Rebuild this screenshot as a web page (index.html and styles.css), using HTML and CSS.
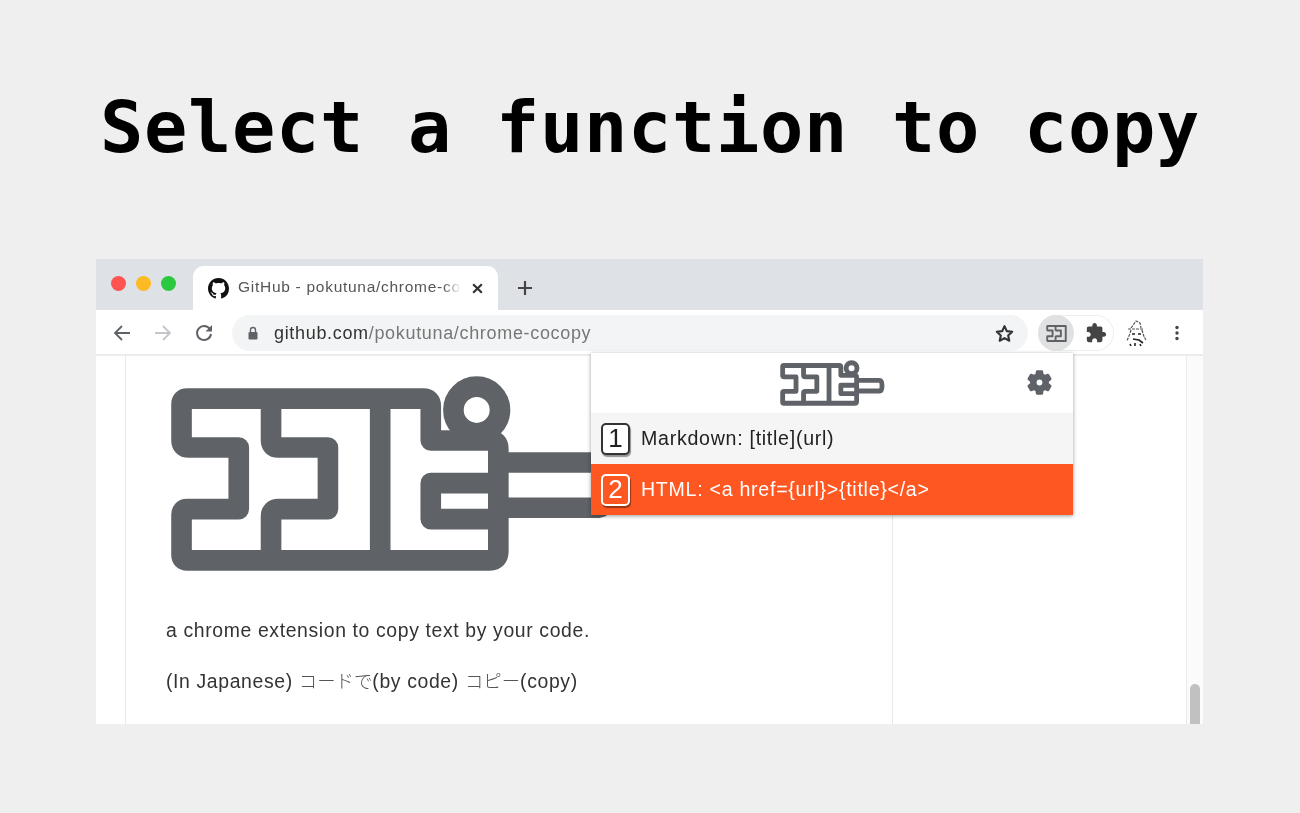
FILE: index.html
```html
<!DOCTYPE html>
<html lang="en">
<head>
<meta charset="utf-8">
<title>Select a function to copy</title>
<link rel="stylesheet" href="styles.css">
</head>
<body>
<svg class="defs" width="0" height="0" aria-hidden="true">
  <symbol id="logo" viewBox="62 30 1345 592">
    <g fill="none" stroke="#5f6368" stroke-width="62" stroke-linejoin="round">
      <circle cx="980" cy="135" r="70"/>
      <path d="M1045 293H1340Q1372 293 1372 361Q1372 429 1340 429H1045"/>
      <path d="M110 101H820Q842 101 842 123V227H1020Q1045 227 1045 252V560Q1045 587 1020 587H110Q93 587 93 570V450Q93 433 110 433H265V248H115Q93 248 93 226V118Q93 101 110 101Z"/>
      <path d="M362 101V226Q362 248 384 248H533V433H384Q362 433 362 455V587"/>
      <path d="M690 101V587"/>
      <path d="M1045 355H842V463H1045"/>
    </g>
  </symbol>
  <symbol id="mark" viewBox="62 70 660 548">
    <g fill="none" stroke="#5f6368" stroke-width="62" stroke-linejoin="round">
      <path d="M110 101H690V587H110Q93 587 93 570V450Q93 433 110 433H265V248H115Q93 248 93 226V118Q93 101 110 101Z"/>
      <path d="M362 101V226Q362 248 384 248H533V433H384Q362 433 362 455V587"/>
    </g>
  </symbol>
</svg>

<h1 class="headline">Select a function to copy</h1>

<div class="browser">
  <div class="tabstrip">
    <div class="lights">
      <span class="light red"></span>
      <span class="light yellow"></span>
      <span class="light green"></span>
    </div>
    <div class="tab">
      <svg class="favicon" viewBox="0 0 16 16"><path fill="#111" d="M8 0C3.58 0 0 3.58 0 8c0 3.54 2.29 6.53 5.47 7.59.4.07.55-.17.55-.38 0-.19-.01-.82-.01-1.49-2.01.37-2.53-.49-2.69-.94-.09-.23-.48-.94-.82-1.13-.28-.15-.68-.52-.01-.53.63-.01 1.08.58 1.23.82.72 1.21 1.87.87 2.33.66.07-.52.28-.87.51-1.07-1.78-.2-3.64-.89-3.64-3.95 0-.87.31-1.59.82-2.15-.08-.2-.36-1.02.08-2.12 0 0 .67-.21 2.2.82.64-.18 1.32-.27 2-.27s1.36.09 2 .27c1.53-1.04 2.2-.82 2.2-.82.44 1.1.16 1.92.08 2.12.51.56.82 1.27.82 2.15 0 3.07-1.87 3.75-3.65 3.95.29.25.54.73.54 1.48 0 1.07-.01 1.93-.01 2.2 0 .21.15.46.55.38A8.01 8.01 0 0 0 16 8c0-4.42-3.58-8-8-8z"/></svg>
      <span class="tab-title">GitHub - pokutuna/chrome-co</span>
      <svg class="tab-close" viewBox="0 0 12 12"><path d="M2 2l8 8M10 2l-8 8" stroke="#333" stroke-width="2" fill="none"/></svg>
    </div>
    <svg class="newtab" viewBox="0 0 16 16"><path d="M8 1v14M1 8h14" stroke="#444" stroke-width="2.200" fill="none"/></svg>
  </div>

  <div class="toolbar">
    <svg class="nav" viewBox="0 0 18 18"><path d="M17 9H2M9 2L2 9l7 7" fill="none" stroke="#5f6368" stroke-width="1.800"/></svg>
    <svg class="nav" viewBox="0 0 18 18"><path d="M1 9h15M9 2l7 7-7 7" fill="none" stroke="#c4c6c9" stroke-width="1.800"/></svg>
    <svg class="nav" viewBox="0 0 18 18"><path d="M14.800 5A7 7 0 1 0 16 10" fill="none" stroke="#5f6368" stroke-width="2"/><path d="M17 1v6.500h-6.500z" fill="#5f6368"/></svg>
    <div class="omnibox">
      <svg class="lock" viewBox="0 0 12 14"><path d="M3.500 6V4a2.500 2.500 0 0 1 5 0v2" fill="none" stroke="#5f6368" stroke-width="1.400"/><rect x="1.500" y="6" width="9" height="7.500" rx="1" fill="#5f6368"/></svg>
      <span class="url"><span class="host">github.com</span>/pokutuna/chrome-cocopy</span>
      <svg class="star" viewBox="0 0 24 24"><path d="M12 3.600l2.600 5.700 6.200.7-4.600 4.200 1.300 6.100L12 17.200l-5.500 3.100 1.300-6.100L3.200 10l6.200-.7z" fill="none" stroke="#333" stroke-width="2.400" stroke-linejoin="round"/></svg>
    </div>
    <div class="pill">
      <span class="ext-active">
        <svg class="ext-icon"><use href="#mark"/></svg>
      </span>
      <svg class="puzzle" viewBox="0 0 24 24"><path fill="#444" d="M20.500 11H19V7c0-1.100-.9-2-2-2h-4V3.500C13 2.120 11.880 1 10.500 1S8 2.120 8 3.500V5H4c-1.100 0-1.990.9-1.990 2v3.800H3.500c1.490 0 2.700 1.210 2.700 2.700s-1.210 2.700-2.700 2.700H2V20c0 1.100.9 2 2 2h3.800v-1.500c0-1.490 1.210-2.700 2.700-2.700 1.490 0 2.700 1.210 2.700 2.700V22H17c1.100 0 2-.9 2-2v-4h1.500c1.380 0 2.500-1.120 2.500-2.500S21.880 11 20.500 11z"/></svg>
    </div>
    <svg class="avatar" viewBox="0 0 26 28"><path d="M8 9l5-7 4 2 1 5M5 10h16M8 11c-1 4-3 8-4 11M19 11c1 4 2 7 4 10" fill="none" stroke="#555" stroke-width="1.200" stroke-dasharray="3 1"/><path d="M9 15h3M15 15h3M10 20l6 1 4 3M7 25l1 2M12 24v3M17 25l1 2" fill="none" stroke="#222" stroke-width="1.600"/></svg>
    <svg class="menu" viewBox="0 0 4 16"><circle cx="2" cy="2.500" r="1.700"/><circle cx="2" cy="8" r="1.700"/><circle cx="2" cy="13.500" r="1.700"/></svg>
  </div>

  <div class="page">
    <main class="readme">
      <svg class="logo-large"><use href="#logo"/></svg>
      <p class="line-one">a chrome extension to copy text by your code.</p>
      <p class="line-two">(In Japanese) <span class="ja">コードで</span>(by code) <span class="ja">コピー</span>(copy)</p>
    </main>
    <aside class="sidebar"></aside>
    <div class="scrollbar"><span class="thumb"></span></div>

    <div class="popup">
      <div class="popup-head">
        <svg class="logo-small"><use href="#logo"/></svg>
        <svg class="gear" viewBox="0 0 24 24"><path fill="#5f6368" stroke="#5f6368" stroke-width="1.200" d="M19.140 12.940c.04-.3.06-.61.06-.94 0-.32-.02-.64-.07-.94l2.030-1.580c.18-.14.23-.41.12-.61l-1.920-3.320c-.12-.22-.37-.29-.59-.22l-2.390.96c-.5-.38-1.030-.7-1.620-.94L14.400 2.810c-.04-.24-.24-.41-.48-.41h-3.840c-.24 0-.43.17-.47.41L9.250 5.350c-.59.24-1.130.57-1.620.94l-2.390-.96c-.22-.08-.47 0-.59.22L2.740 8.870c-.12.21-.08.47.12.61l2.030 1.580c-.05.3-.09.63-.09.94s.02.64.07.94l-2.030 1.580c-.18.14-.23.41-.12.61l1.920 3.320c.12.22.37.29.59.22l2.390-.96c.5.38 1.030.7 1.620.94l.36 2.540c.05.24.24.41.48.41h3.840c.24 0 .44-.17.47-.41l.36-2.540c.59-.24 1.130-.56 1.620-.94l2.390.96c.22.08.47 0 .59-.22l1.920-3.320c.12-.22.07-.47-.12-.61l-2.010-1.580zM12 15c-1.700 0-3-1.300-3-3s1.300-3 3-3 3 1.300 3 3-1.300 3-3 3z"/></svg>
      </div>
      <div class="item">
        <span class="key">1</span>
        <span class="label">Markdown: [title](url)</span>
      </div>
      <div class="item selected">
        <span class="key">2</span>
        <span class="label">HTML: &lt;a href={url}&gt;{title}&lt;/a&gt;</span>
      </div>
    </div>
  </div>
</div>
</body>
</html>
```
FILE: styles.css
```css
* { box-sizing: border-box; }

html, body { height: 100%; }

body {
  margin: 0;
  background: #efefef;
  font-family: "Liberation Sans", Arial, sans-serif;
  overflow: hidden;
}

.defs { display: block; height: 0; }

.headline {
  margin: 0;
  padding-top: 85px;
  height: 259px;
  text-align: center;
  font: bold 72px/85px "DejaVu Sans Mono", monospace;
  letter-spacing: .65px;
  color: #000;
  filter: blur(.4px);
}

.browser {
  width: 1107px;
  height: 465px;
  margin-left: 96px;
  display: flex;
  flex-direction: column;
  background: #fff;
  filter: blur(.4px);
}

.tabstrip {
  height: 51px;
  flex: none;
  background: #dee1e6;
  display: flex;
  align-items: flex-end;
}

.lights {
  width: 97px;
  height: 100%;
  display: flex;
  gap: 10px;
  padding: 17px 0 0 15px;
}

.light { width: 15px; height: 15px; border-radius: 50%; }
.red { background: #fd5353; }
.yellow { background: #fdbb21; }
.green { background: #2bc840; }

.tab {
  width: 305px;
  height: 44px;
  background: #fff;
  border-radius: 11px 11px 0 0;
  display: flex;
  align-items: center;
  padding: 0 14px 0 15px;
}

.favicon { width: 21px; height: 21px; flex: none; margin-right: 9px; margin-top: 1px; }

.tab-title {
  width: 223px;
  flex: none;
  margin-top: -2px;
  white-space: nowrap;
  font-size: 15.500px;
  letter-spacing: .72px;
  color: #555;
  -webkit-mask-image: linear-gradient(90deg, #000 92%, transparent);
  mask-image: linear-gradient(90deg, #000 92%, transparent);
}

.tab-close { width: 13px; height: 13px; flex: none; margin-left: 10px; }

.newtab { width: 16px; height: 16px; margin: 0 0 14px 19px; }

.toolbar {
  height: 46px;
  flex: none;
  background: #fff;
  border-bottom: 2px solid #ececec;
  display: flex;
  align-items: center;
  padding: 2px 0 0 17px;
}

.nav { width: 18px; height: 18px; flex: none; margin-right: 23px; }

.omnibox {
  width: 796px;
  height: 36px;
  margin-left: -4px;
  border-radius: 18px;
  background: #f3f4f5;
  display: flex;
  align-items: center;
  padding: 0 13px 0 15px;
}

.lock { width: 12px; height: 14px; flex: none; margin-right: 15px; }

.url {
  flex: 1;
  font-size: 18px;
  letter-spacing: .67px;
  color: #777;
  white-space: nowrap;
}

.host { color: #333; }

.star { width: 21px; height: 21px; flex: none; }

.pill {
  width: 76px;
  height: 36px;
  margin-left: 10px;
  flex: none;
  border: 1px solid #efefef;
  border-left: 0;
  border-radius: 18px;
  display: flex;
  align-items: center;
}

.ext-active {
  width: 36px;
  height: 36px;
  border-radius: 50%;
  background: #e0e1e2;
  display: flex;
  align-items: center;
  justify-content: center;
}

.ext-icon { width: 21px; height: 17px; }

.puzzle { width: 22px; height: 22px; margin-left: 11px; }

.avatar { width: 26px; height: 28px; flex: none; margin-left: 9px; }

.menu { width: 4px; height: 16px; flex: none; margin-left: 26px; fill: #444; }

.page {
  flex: 1;
  min-height: 0;
  position: relative;
  display: flex;
  padding-left: 29px;
  background: #fff;
}

.readme {
  width: 768px;
  flex: none;
  border-left: 1px solid #e8e8e8;
  border-right: 1px solid #e8e8e8;
  padding: 19px 0 0 40px;
}

.logo-large {
  display: block;
  width: 448px;
  height: 197px;
  margin-left: 5px;
}

.readme p {
  margin: 0;
  font-size: 19.400px;
  letter-spacing: .63px;
  line-height: 24px;
  color: #333;
  white-space: nowrap;
}

.line-one { padding-top: 46px; }
.line-two { padding-top: 26px; }
.ja { font-family: "Noto Sans CJK JP", sans-serif; font-size: 18.400px; font-weight: 300; letter-spacing: 0; color: #555; }

.sidebar { width: 294px; flex: none; border-right: 1px solid #eaeaea; }

.scrollbar {
  flex: 1;
  background: #fbfbfb;
  display: flex;
  align-items: flex-end;
  padding-left: 3px;
}

.thumb {
  width: 10px;
  height: 40px;
  border-radius: 5px 5px 0 0;
  background: #c1c1c1;
}

.popup {
  position: absolute;
  left: 495px;
  top: -3px;
  width: 482px;
  height: 162px;
  background: #fff;
  box-shadow: 0 1px 4px rgba(0, 0, 0, .4);
  display: flex;
  flex-direction: column;
}

.popup-head {
  height: 60px;
  flex: none;
  position: relative;
  display: flex;
  align-items: center;
  justify-content: center;
}

.logo-small { width: 105px; height: 46px; }

.gear {
  position: absolute;
  right: 19px;
  top: 15px;
  width: 29px;
  height: 29px;
}

.item {
  height: 51px;
  flex: none;
  display: flex;
  align-items: center;
  padding-left: 10px;
  background: #f5f5f5;
  color: #222;
  font-size: 19.600px;
  letter-spacing: .72px;
}

.item.selected { background: #ff5722; color: #fff; }

.key {
  width: 29px;
  height: 32px;
  margin-right: 11px;
  flex: none;
  border: 2px solid #333;
  border-radius: 5px;
  background: #fff;
  box-shadow: 1px 2px 1px rgba(0, 0, 0, .4);
  display: flex;
  align-items: center;
  justify-content: center;
  font-size: 26px;
  letter-spacing: 0;
  color: #222;
}

.selected .key {
  background: #ff5722;
  border-color: #fff;
  color: #fff;
}

.label { white-space: nowrap; }
```
